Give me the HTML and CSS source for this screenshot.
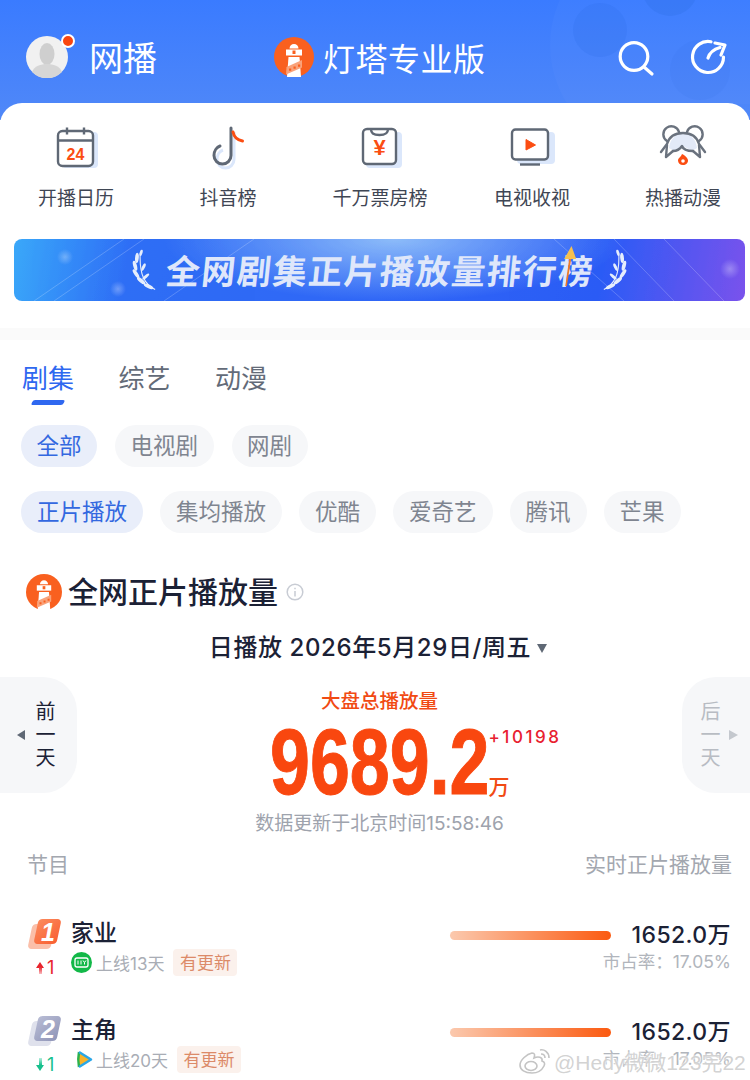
FILE: index.html
```html
<!DOCTYPE html>
<html lang="zh">
<head>
<meta charset="utf-8">
<title>灯塔专业版</title>
<link rel="stylesheet" href="styles.css">
</head>
<body>
<div class="page">
  <header class="top">
    <svg class="deco" width="210" height="104" viewBox="0 0 210 104"><circle cx="120" cy="45" r="110" fill="#fff" opacity=".025"/><circle cx="60" cy="30" r="27" fill="#2f6fe6" opacity=".22"/><circle cx="130" cy="-12" r="28" fill="#2f6fe6" opacity=".32"/><circle cx="160" cy="70" r="30" fill="#2f6fe6" opacity=".1"/></svg>
    <div class="top-left">
      <div class="avatar">
        <svg width="42" height="42" viewBox="0 0 42 42"><circle cx="21" cy="21" r="21" fill="#f1f1f1"/><ellipse cx="21" cy="18" rx="7.500" ry="11" fill="#cfcfcf"/><path d="M6 36c2-6 9-8 15-8s13 2 15 8a21 21 0 0 1-30 0z" fill="#d6d6d6"/></svg>
        <span class="dot"></span>
      </div>
      <span class="top-name">网播</span>
    </div>
    <div class="brand">
      <svg class="logo" width="40" height="40" viewBox="0 0 40 40"><use href="#tower"/></svg>
      <span class="brand-name">灯塔专业版</span>
    </div>
    <div class="top-icons">
      <svg width="40" height="40" viewBox="0 0 40 40" fill="none" stroke="#fff" stroke-width="3.200" stroke-linecap="round"><circle cx="18" cy="19.500" r="13.800"/><path d="M28 30l8 7"/></svg>
      <svg width="40" height="40" viewBox="0 0 40 40" fill="none" stroke="#fff" stroke-width="3.200" stroke-linecap="round" stroke-linejoin="round"><path d="M23 4.800A15.500 15.500 0 1 0 35.500 20"/><path d="M20 21c1.500-5 5-8.500 12-10.500"/><path d="M27 6l10 2-4 10"/></svg>
    </div>
  </header>

  <section class="panel">
    <nav class="quick">
      <a class="quick-item">
        <svg width="48" height="48" viewBox="0 0 48 48"><rect x="10" y="8" width="36" height="36" rx="4" fill="#dbe7fb"/><rect x="6" y="7" width="35" height="35" rx="4.500" fill="#fff" stroke="#5f6875" stroke-width="2.400"/><path d="M6 16.500h35M15 3.500v7M32 3.500v7" stroke="#5f6875" stroke-width="2.400" fill="none"/><text x="23.500" y="36" class="cal">24</text></svg>
        <span>开播日历</span>
      </a>
      <a class="quick-item">
        <svg width="48" height="48" viewBox="0 0 48 48" fill="none"><path d="M27 6v27.500c0 5-4 8.500-8.500 8.500S10 38.500 10 33.500s3-8.500 6-9.500" stroke="#dbe7fb" stroke-width="3" transform="translate(3 2)"/><path d="M27 4v27.500c0 5-4 8.500-8.500 8.500S10 36.500 10 31.500s3-8.500 6-9.500" stroke="#5f6875" stroke-width="3" stroke-linecap="round"/><path d="M29 8c1 5 4 8 9.500 9" stroke="#fb4d12" stroke-width="3" stroke-linecap="round"/></svg>
        <span>抖音榜</span>
      </a>
      <a class="quick-item">
        <svg width="48" height="48" viewBox="0 0 48 48" fill="none"><rect x="10" y="8" width="36" height="36" rx="4" fill="#dbe7fb"/><rect x="7" y="5" width="33" height="35" rx="4" fill="#fff" stroke="#5f6875" stroke-width="2.400"/><path d="M15 5c0 4 2 6 8.500 6S32 9 32 5" stroke="#5f6875" stroke-width="2.400"/><text x="23.500" y="31" class="yen">¥</text></svg>
        <span>千万票房榜</span>
      </a>
      <a class="quick-item">
        <svg width="48" height="48" viewBox="0 0 48 48" fill="none"><rect x="9" y="8" width="38" height="32" rx="4" fill="#dbe7fb"/><rect x="4" y="5.500" width="36" height="30" rx="3.500" fill="#fff" stroke="#5f6875" stroke-width="2.400"/><path d="M18 15.500l9.500 5.500-9.500 5z" fill="#fb4d12" stroke="#fb4d12" stroke-linejoin="round"/><path d="M12 40.500h20" stroke="#5f6875" stroke-width="2.400"/></svg>
        <span>电视收视</span>
      </a>
      <a class="quick-item">
        <svg width="48" height="48" viewBox="0 0 48 48" fill="none" stroke="#6a727e" stroke-width="2.400" stroke-linecap="round" stroke-linejoin="round"><path d="M10 24c1-9 7-15 14-15s13 6 14 15l-5 3-9-5-9 5z" fill="#e3eaf8" stroke="none"/><path d="M8 17A8 8 0 1 1 20 8M40 17A8 8 0 1 0 28 8"/><path d="M2 28l6-8C10 13 16 9 24 9s14 4 16 11l6 8"/><path d="M8 21l-1 12 7-6M40 21l1 12-7-6"/><path d="M14 27c5 0 7-2 9-5 1 3 3 5 11 5"/><path d="M24 41c-3 0-5-2-5-4.500 0-2.500 3-3.500 4-6.500 3 1.500 6 4 6 6.500S27 41 24 41z" fill="#fb4d12" stroke="none"/><circle cx="24" cy="37" r="1.800" fill="#fff" stroke="none"/></svg>
        <span>热播动漫</span>
      </a>
    </nav>
    <div class="banner">
      <svg class="rays" width="731" height="62" viewBox="0 0 731 62" fill="none" stroke="#fff" opacity=".2"><path d="M20 62L110 0M40 62L130 0M150 62L240 0"/><path d="M650 0l60 62M600 0l60 62M540 0l70 62"/></svg>
      <svg width="28" height="42" viewBox="0 0 30 44" fill="#e6eefc"><use href="#laurel"/></svg>
      <span class="banner-text">全网剧集正片播放量排行榜<svg class="up-arrow" width="14" height="40" viewBox="0 0 14 40"><path d="M6 13h2L6.500 40 5 40z" fill="#ef7b23"/><path d="M7 0l6 13H1z" fill="#f6c04f"/></svg></span>
      <svg class="flip" width="28" height="42" viewBox="0 0 30 44" fill="#e6eefc"><use href="#laurel"/></svg>
    </div>
  </section>

  <main class="content">
    <div class="tabs">
      <span class="tab active">剧集</span>
      <span class="tab">综艺</span>
      <span class="tab">动漫</span>
    </div>
    <div class="chips first">
      <span class="chip on">全部</span>
      <span class="chip">电视剧</span>
      <span class="chip">网剧</span>
    </div>
    <div class="chips second">
      <span class="chip on">正片播放</span>
      <span class="chip">集均播放</span>
      <span class="chip">优酷</span>
      <span class="chip">爱奇艺</span>
      <span class="chip">腾讯</span>
      <span class="chip">芒果</span>
    </div>
    <div class="title-row">
      <svg width="36" height="36" viewBox="0 0 40 40"><use href="#tower"/></svg>
      <h1>全网正片播放量</h1>
      <svg class="info" width="18" height="18" viewBox="0 0 18 18" fill="none" stroke="#c8ccd4" stroke-width="1.500"><circle cx="9" cy="9" r="7.800"/><path d="M9 8v5.500M9 4.800v1.500"/></svg>
    </div>
    <div class="date-row">日播放&nbsp;2026年5月29日/周五<i class="caret"></i></div>

    <div class="stats">
      <div class="side prev"><i class="tri left"></i><span class="side-text">前一天</span></div>
      <div class="total">
        <div class="total-label">大盘总播放量</div>
        <div class="total-num">
          <span class="big">9689.2</span>
          <span class="aside"><span class="plus">+10198</span><span class="wan">万</span></span>
        </div>
        <div class="updated">数据更新于北京时间15:58:46</div>
      </div>
      <div class="side next"><span class="side-text">后一天</span><i class="tri right"></i></div>
    </div>

    <div class="table-head"><span>节目</span><span>实时正片播放量</span></div>

    <div class="row">
      <div class="rank-col">
        <span class="rank gold"><b>1</b></span>
        <span class="move up"><i class="arrow-up"></i>1</span>
      </div>
      <div class="show">
        <div class="show-name">家业</div>
        <div class="show-meta">
          <svg width="21" height="21" viewBox="0 0 21 21"><circle cx="10.500" cy="10.500" r="10.500" fill="#12b848"/><rect x="4" y="6" width="13" height="9" rx="2" fill="none" stroke="#fff" stroke-width="1.300"/><path d="M7 8.500v4M10 8.500v4M12 8.500l1.500 2 1.500-2M13.500 10.500v2" stroke="#fff" stroke-width="1" fill="none"/></svg>
          <span class="days">上线13天</span><span class="tag">有更新</span>
        </div>
      </div>
      <div class="bar"></div>
      <div class="nums"><div class="val">1652.0万</div><div class="share">市占率：17.05%</div></div>
    </div>

    <div class="row">
      <div class="rank-col">
        <span class="rank silver"><b>2</b></span>
        <span class="move down"><i class="arrow-down"></i>1</span>
      </div>
      <div class="show">
        <div class="show-name">主角</div>
        <div class="show-meta">
          <svg class="tx" width="21" height="21" viewBox="0 0 21 21" fill="none"><path d="M5 3l12 7.500L5 18z" fill="#f8b32a"/><path d="M5 3c-1 5-1 10 0 15" stroke="#2bb24c" stroke-width="2.500"/><path d="M5 3l12 7.500L5 18" stroke="#2aa7e8" stroke-width="2.500" stroke-linejoin="round"/></svg>
          <span class="days">上线20天</span><span class="tag">有更新</span>
        </div>
      </div>
      <div class="bar"></div>
      <div class="nums"><div class="val">1652.0万</div><div class="share">市占率：17.05%</div></div>
    </div>
  </main>

  <div class="watermark">
    <svg width="34" height="28" viewBox="0 0 34 28" fill="none" stroke="#c4c4c4" stroke-width="1.600"><path d="M14 26C7 26 2 23 2 18c0-5 7-11 12-12 3 0 3 2 2 5 4-2 9-1 8 3 3 1 3 3 2 5-2 4-6 7-12 7z" fill="#fff"/><ellipse cx="13" cy="19" rx="6" ry="4.500"/><path d="M22 3c4-1 9 2 9 8M23 7c2 0 4 1 4 4"/></svg>
    <span>@Hedy微微123完22</span>
  </div>

  <svg class="defs" width="0" height="0">
    <defs>
      <symbol id="tower" viewBox="0 0 40 40">
        <circle cx="20" cy="20" r="20" fill="#f9601f"/>
        <path d="M15.500 11.500c0-2.500 2-4.500 4.500-4.500s4.500 2 4.500 4.500z" fill="#fff"/>
        <rect x="12" y="12.500" width="16" height="6" fill="#fff"/>
        <rect x="18.500" y="13.500" width="3" height="3.500" fill="#f9601f"/>
        <path d="M14.500 20h11l1.500 20H13z" fill="#fff"/>
        <path d="M12.500 30L28 23v7.500L12 37.500z" fill="#f9a27a"/>
        <path d="M15 31.500h2.200v2.200H15zM19.500 29.500h2.200v2.200h-2.200zM24 27.500h2.200v2.200H24z" fill="#f9601f"/>
      </symbol>
      <symbol id="laurel" viewBox="0 0 30 44">
        <path d="M28 43C17 37 11 28 12 4" fill="none" stroke="#e6eefc" stroke-width="1.200"/>
        <ellipse cx="21" cy="39.500" rx="5.500" ry="2" transform="rotate(25 21 39.500)"/>
        <ellipse cx="13" cy="33.500" rx="5.500" ry="2" transform="rotate(40 13 33.500)"/>
        <ellipse cx="7.500" cy="26" rx="5.500" ry="2" transform="rotate(55 7.500 26)"/>
        <ellipse cx="6.500" cy="17.500" rx="5.500" ry="2" transform="rotate(75 6.500 17.500)"/>
        <ellipse cx="8.500" cy="9" rx="5.500" ry="2" transform="rotate(95 8.500 9)"/>
        <ellipse cx="13" cy="3.500" rx="3.500" ry="1.500" transform="rotate(105 13 3.500)"/>
        <ellipse cx="18" cy="29" rx="4.500" ry="1.600" transform="rotate(-40 18 29)"/>
        <ellipse cx="15.500" cy="19" rx="4.500" ry="1.600" transform="rotate(-65 15.500 19)"/>
      </symbol>
    </defs>
  </svg>
</div>
</body>
</html>
```
FILE: styles.css
```css
* { box-sizing: border-box; margin: 0; padding: 0; }
html, body { background: #fff; }
body { font-family: "Noto Sans CJK SC", "Inter", "Liberation Sans", sans-serif; color: #1b2135; }
.page { width: 750px; height: 1080px; overflow: hidden; position: relative; background: #fff; }
.defs { position: absolute; }

.top { height: 120px; background: linear-gradient(180deg, #3a7bff 0%, #5088f8 100%); display: flex; align-items: flex-start; padding: 29px 22px 0 26px; position: relative; margin-bottom: -17px; overflow: hidden; }
.deco { position: absolute; right: 0; top: 0; }
.top-left { display: flex; align-items: center; width: 248px; height: 56px; position: relative; }
.avatar { position: relative; width: 42px; height: 42px; margin-right: 21px; }
.avatar svg { display: block; }
.dot { position: absolute; right: -7px; top: -2px; width: 14px; height: 14px; border-radius: 50%; background: #f9460f; border: 2px solid #fff; }
.top-name { color: #fff; font-size: 34px; line-height: 56px; }
.brand { display: flex; align-items: center; height: 56px; position: relative; }
.logo { margin-right: 9px; }
.brand-name { color: #fff; font-size: 32px; line-height: 56px; letter-spacing: 0.5px; }
.top-icons { margin-left: auto; display: flex; gap: 32px; height: 56px; align-items: center; position: relative; }

.panel { background: #fff; border-radius: 22px 22px 0 0; position: relative; height: 225px; padding-top: 21px; }
.quick { display: grid; grid-template-columns: 152px 152px 152px 152px 150px; height: 95px; }
.quick-item { display: flex; flex-direction: column; align-items: center; color: #3f4654; font-size: 19px; }
.quick-item span { margin-top: 10px; line-height: 30px; }
.cal { font: 700 16px "Liberation Sans", sans-serif; fill: #fb4d12; text-anchor: middle; }
.yen { font: 700 22px "Liberation Sans", sans-serif; fill: #fb4d12; text-anchor: middle; }

.banner { position: relative; margin: 20px 5px 0 14px; height: 62px; border-radius: 8px; background:
  radial-gradient(circle 8px at 51px 18px, rgba(255,255,255,.3), transparent),
  radial-gradient(circle 8px at 104px 50px, rgba(255,255,255,.3), transparent),
  radial-gradient(circle 10px at 716px 30px, rgba(255,255,255,.3), transparent),
  radial-gradient(ellipse 230px 62px at 52% 0, #8dbcf9, transparent),
  linear-gradient(100deg, #3aa8f9 0%, #2f6ef6 16%, #2f66f6 50%, #2b5cf6 80%, #7a52ec 100%);
  display: flex; align-items: center; justify-content: center; gap: 7px; overflow: hidden; }
.rays { position: absolute; left: 0; top: 0; }
.flip { transform: scaleX(-1); }
.banner-text { font-size: 34px; font-weight: 700; letter-spacing: 1.7px; color: #dfe7fa; position: relative; line-height: 62px; transform: skewX(-6deg); margin-left: 2px; }
.up-arrow { position: absolute; right: 18px; top: 7px; }

.content { border-top: 12px solid #fafafa; padding-top: 17px; position: relative; }

.tabs { display: flex; gap: 44.500px; padding-left: 22px; height: 57px; }
.tab { font-size: 26px; line-height: 40px; color: #636b78; position: relative; }
.tab.active { color: #2f68f0; }
.tab.active::after { content: ""; position: absolute; left: 10px; top: 43px; width: 32px; height: 5px; border-radius: 2px; background: #2f68f0; transform: skewX(-25deg); }

.chips { display: flex; }
.chips.first { padding: 11px 0 0 21px; gap: 18px; }
.chips.second { padding: 24px 0 0 21px; gap: 17px; }
.chip { height: 42px; line-height: 39px; padding: 0 15.500px; border-radius: 21px; background: #f6f7f9; color: #7f8590; font-size: 22.500px; }
.chips.second .chip { padding: 0 16px; }
.chip.on { background: #e9eefa; color: #3368e0; }

.title-row { display: flex; align-items: center; margin: 41px 0 0 26px; height: 36px; }
h1 { font-size: 30px; font-weight: 500; margin-left: 6px; line-height: 33px; padding-bottom: 3px; color: #1b2135; }
.info { margin-left: 8px; }
.date-row { margin-top: 20px; padding-left: 6px; text-align: center; font-family: "Inter", "Noto Sans CJK SC", sans-serif; font-size: 24px; line-height: 36px; letter-spacing: 0.6px; color: #1b2135; font-weight: 500; }
.caret { display: inline-block; margin-left: 6px; vertical-align: 3px; border-left: 5px solid transparent; border-right: 5px solid transparent; border-top: 9px solid #5f6875; }

.stats { display: flex; justify-content: space-between; margin-top: 12px; height: 172px; }
.side { width: 68px; height: 116px; background: #f6f7f9; display: flex; align-items: center; font-size: 20px; margin-top: -1px; }
.side-text { writing-mode: vertical-rl; letter-spacing: 3px; line-height: 20px; display: block; }
.prev { border-radius: 0 34px 34px 0; justify-content: flex-end; padding-right: 22px; gap: 10px; width: 77px; color: #1b2135; }
.next { border-radius: 34px 0 0 34px; padding-left: 18px; gap: 9px; color: #b8bcc3; }
.tri { width: 0; height: 0; border-top: 5px solid transparent; border-bottom: 5px solid transparent; }
.tri.left { border-right: 8px solid #5f6875; }
.tri.right { border-left: 9px solid #c4c8ce; }
.total { flex: 1; display: flex; flex-direction: column; align-items: center; }
.total-label { font-size: 19.500px; line-height: 24px; color: #f14a13; font-weight: 500; margin-top: 10px; }
.total-num { display: flex; height: 84px; width: 290px; margin: 8px 0 0 70px; }
.big { font-family: "Liberation Sans", sans-serif; font-weight: 700; font-size: 92px; line-height: 84px; color: #f9470f; -webkit-text-stroke: 1px #f9470f; transform: scaleX(.78); transform-origin: left center; display: inline-block; width: 219px; }
.aside { display: flex; flex-direction: column; justify-content: space-between; padding: 7px 0 7px; }
.plus { font-family: "Inter", sans-serif; font-size: 17px; line-height: 20px; color: #e8202f; letter-spacing: 2.500px; font-weight: 500; }
.wan { font-size: 21px; line-height: 24px; color: #f14a13; font-weight: 500; }
.updated { font-family: "Inter", "Noto Sans CJK SC", sans-serif; font-size: 19px; line-height: 26px; color: #9ea3ad; margin-top: 7px; }

.table-head { display: flex; justify-content: space-between; padding: 0 18px 0 27px; font-size: 21px; line-height: 30px; color: #a3a7af; margin-top: -2px; }

.row { display: flex; height: 97px; padding-left: 27px; align-items: flex-start; position: relative; }
.table-head + .row { margin-top: 38px; }
.rank-col { width: 44px; display: flex; flex-direction: column; align-items: flex-start; }
.rank { width: 34px; height: 30px; position: relative; margin-top: 3px; display: block; }
.rank::before, .rank::after { content: ""; position: absolute; border-radius: 4px; transform: skewX(-12deg); width: 23px; height: 25px; }
.rank::before { left: 3px; top: 5px; }
.rank::after { left: 9px; top: 0; }
.gold::before { background: #fbbfa9; }
.gold::after { background: linear-gradient(135deg, #fb8a5e, #f95f30); }
.silver::before { background: #dfe1ec; }
.silver::after { background: linear-gradient(135deg, #b8bcd4, #9095b8); }
.rank b { position: absolute; z-index: 1; left: 14px; top: -1px; color: #fff; font: italic 700 25px/28px "Liberation Sans", sans-serif; }
.move { display: flex; align-items: center; gap: 3px; font-family: "Inter", sans-serif; font-size: 18px; line-height: 20px; margin: 9px 0 0 9px; }
.move.up { color: #e8242c; }
.move.down { color: #17c08d; }
.arrow-up, .arrow-down { display: inline-block; width: 0; height: 0; border-left: 4px solid transparent; border-right: 4px solid transparent; position: relative; }
.arrow-up { border-bottom: 6px solid #e8242c; margin-top: -6px; }
.arrow-up::after { content: ""; position: absolute; left: -1.500px; top: 5px; width: 3px; height: 7px; background: linear-gradient(#e8242c, #f9bcc0); }
.arrow-down { border-top: 6px solid #17c08d; margin-top: 6px; }
.arrow-down::after { content: ""; position: absolute; left: -1.500px; top: -13px; width: 3px; height: 7px; background: linear-gradient(#b5eedd, #17c08d); }
.show { width: 379px; }
.show-name { font-size: 23px; line-height: 30px; font-weight: 500; color: #1b2135; }
.show-meta { display: flex; align-items: center; height: 30px; margin-top: 1px; }
.tx { margin-left: 3px; margin-right: -3px; }
.days { font-family: "Inter", "Noto Sans CJK SC", sans-serif; font-size: 17px; color: #a9adb5; margin-left: 4px; }
.tag { margin-left: 9px; height: 27px; line-height: 26px; padding: 0 6.500px; background: #fbf1ec; border-radius: 4px; color: #dc8a68; font-size: 17px; }
.bar { width: 161px; height: 9px; border-radius: 5px; background: linear-gradient(90deg, #fbc9ae, #fb5a10); margin: 15px -10px 0 0; }
.nums { flex: 1; text-align: right; padding: 4px 19px 0 0; white-space: nowrap; }
.val { font-family: "Inter", "Noto Sans CJK SC", sans-serif; font-size: 23px; line-height: 30px; letter-spacing: 0.4px; color: #1b2135; font-weight: 500; }
.share { font-family: "Inter", "Noto Sans CJK SC", sans-serif; font-size: 17.500px; line-height: 26px; color: #b1b5bc; margin-top: -1px; }

.watermark { position: absolute; left: 518px; top: 1046px; display: flex; align-items: center; gap: 2px; color: rgba(205,205,205,.9); font-size: 21px; font-family: "Liberation Sans", "Noto Sans CJK SC", sans-serif; text-shadow: 0 0 2px #fff, 0 0 3px #fff; }
```
